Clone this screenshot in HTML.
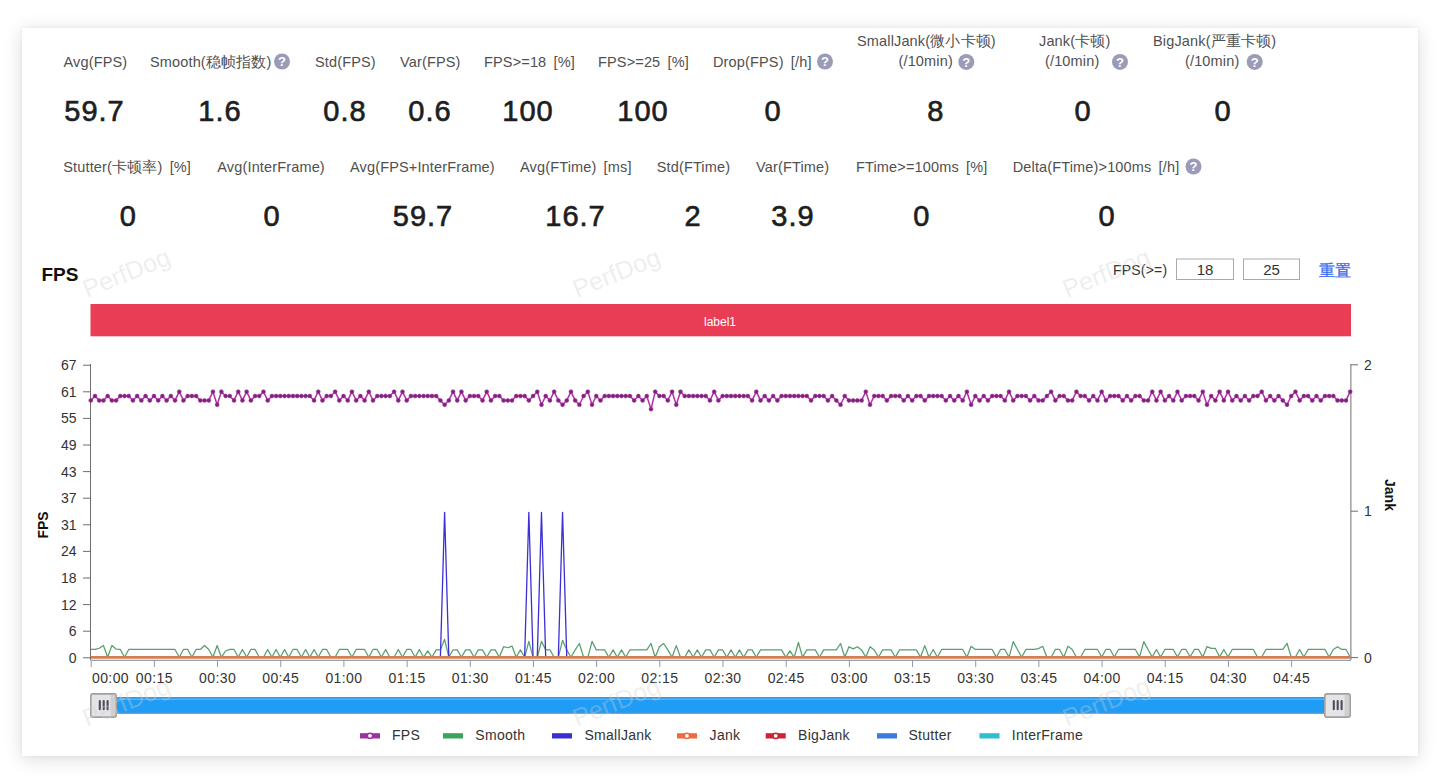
<!DOCTYPE html>
<html><head><meta charset="utf-8"><style>
html,body{margin:0;padding:0;width:1440px;height:779px;overflow:hidden;background:#fff;}
.card{position:absolute;left:22px;top:28px;width:1396px;height:728px;background:#fff;box-shadow:0 0 4px rgba(0,0,0,0.05),0 3px 18px rgba(0,0,0,0.14);}
svg{position:absolute;left:0;top:0;}
</style></head><body>
<div class="card"></div>
<svg width="1440" height="779" viewBox="0 0 1440 779">
<text x="63.5" y="66.6" font-family="Liberation Sans" font-size="14.5" fill="#505050" letter-spacing="0.15" word-spacing="3">Avg(FPS)</text>
<text x="150" y="66.6" font-family="Liberation Sans" font-size="14.5" fill="#505050" letter-spacing="0.15" word-spacing="3">Smooth(稳帧指数)</text>
<text x="315" y="66.6" font-family="Liberation Sans" font-size="14.5" fill="#505050" letter-spacing="0.15" word-spacing="3">Std(FPS)</text>
<text x="400" y="66.6" font-family="Liberation Sans" font-size="14.5" fill="#505050" letter-spacing="0.15" word-spacing="3">Var(FPS)</text>
<text x="484" y="66.6" font-family="Liberation Sans" font-size="14.5" fill="#505050" letter-spacing="0.15" word-spacing="3">FPS&gt;=18 [%]</text>
<text x="598" y="66.6" font-family="Liberation Sans" font-size="14.5" fill="#505050" letter-spacing="0.15" word-spacing="3">FPS&gt;=25 [%]</text>
<text x="713" y="66.6" font-family="Liberation Sans" font-size="14.5" fill="#505050" letter-spacing="0.15" word-spacing="3">Drop(FPS) [/h]</text>
<circle cx="282" cy="61.5" r="8" fill="#9c9bb7"/><text x="282" y="66.1" font-family="Liberation Sans" font-size="13" font-weight="bold" fill="#fff" text-anchor="middle">?</text>
<circle cx="825" cy="61.5" r="8" fill="#9c9bb7"/><text x="825" y="66.1" font-family="Liberation Sans" font-size="13" font-weight="bold" fill="#fff" text-anchor="middle">?</text>
<text x="857" y="46.4" font-family="Liberation Sans" font-size="14.5" fill="#505050" letter-spacing="0.15" word-spacing="3">SmallJank(微小卡顿)</text>
<text x="898.5" y="66.4" font-family="Liberation Sans" font-size="14.5" fill="#505050" letter-spacing="0.15" word-spacing="3">(/10min)</text>
<circle cx="966.3" cy="61.9" r="8" fill="#9c9bb7"/><text x="966.3" y="66.5" font-family="Liberation Sans" font-size="13" font-weight="bold" fill="#fff" text-anchor="middle">?</text>
<text x="1039" y="46.4" font-family="Liberation Sans" font-size="14.5" fill="#505050" letter-spacing="0.15" word-spacing="3">Jank(卡顿)</text>
<text x="1045" y="66.4" font-family="Liberation Sans" font-size="14.5" fill="#505050" letter-spacing="0.15" word-spacing="3">(/10min)</text>
<circle cx="1120" cy="61.9" r="8" fill="#9c9bb7"/><text x="1120" y="66.5" font-family="Liberation Sans" font-size="13" font-weight="bold" fill="#fff" text-anchor="middle">?</text>
<text x="1153" y="46.4" font-family="Liberation Sans" font-size="14.5" fill="#505050" letter-spacing="0.15" word-spacing="3">BigJank(严重卡顿)</text>
<text x="1185" y="66.4" font-family="Liberation Sans" font-size="14.5" fill="#505050" letter-spacing="0.15" word-spacing="3">(/10min)</text>
<circle cx="1254.7" cy="61.9" r="8" fill="#9c9bb7"/><text x="1254.7" y="66.5" font-family="Liberation Sans" font-size="13" font-weight="bold" fill="#fff" text-anchor="middle">?</text>
<text x="94.5" y="120.6" font-family="Liberation Sans" font-size="29" fill="#1e1e1e" stroke="#1e1e1e" stroke-width="0.65" text-anchor="middle" letter-spacing="1">59.7</text>
<text x="220" y="120.6" font-family="Liberation Sans" font-size="29" fill="#1e1e1e" stroke="#1e1e1e" stroke-width="0.65" text-anchor="middle" letter-spacing="1">1.6</text>
<text x="345" y="120.6" font-family="Liberation Sans" font-size="29" fill="#1e1e1e" stroke="#1e1e1e" stroke-width="0.65" text-anchor="middle" letter-spacing="1">0.8</text>
<text x="430" y="120.6" font-family="Liberation Sans" font-size="29" fill="#1e1e1e" stroke="#1e1e1e" stroke-width="0.65" text-anchor="middle" letter-spacing="1">0.6</text>
<text x="528" y="120.6" font-family="Liberation Sans" font-size="29" fill="#1e1e1e" stroke="#1e1e1e" stroke-width="0.65" text-anchor="middle" letter-spacing="1">100</text>
<text x="643" y="120.6" font-family="Liberation Sans" font-size="29" fill="#1e1e1e" stroke="#1e1e1e" stroke-width="0.65" text-anchor="middle" letter-spacing="1">100</text>
<text x="773" y="120.6" font-family="Liberation Sans" font-size="29" fill="#1e1e1e" stroke="#1e1e1e" stroke-width="0.65" text-anchor="middle" letter-spacing="1">0</text>
<text x="935.7" y="120.6" font-family="Liberation Sans" font-size="29" fill="#1e1e1e" stroke="#1e1e1e" stroke-width="0.65" text-anchor="middle" letter-spacing="1">8</text>
<text x="1083" y="120.6" font-family="Liberation Sans" font-size="29" fill="#1e1e1e" stroke="#1e1e1e" stroke-width="0.65" text-anchor="middle" letter-spacing="1">0</text>
<text x="1223" y="120.6" font-family="Liberation Sans" font-size="29" fill="#1e1e1e" stroke="#1e1e1e" stroke-width="0.65" text-anchor="middle" letter-spacing="1">0</text>
<text x="63.3" y="172.4" font-family="Liberation Sans" font-size="14.5" fill="#505050" letter-spacing="0.15" word-spacing="3">Stutter(卡顿率) [%]</text>
<text x="217.3" y="172.4" font-family="Liberation Sans" font-size="14.5" fill="#505050" letter-spacing="0.15" word-spacing="3">Avg(InterFrame)</text>
<text x="350" y="172.4" font-family="Liberation Sans" font-size="14.5" fill="#505050" letter-spacing="0.15" word-spacing="3">Avg(FPS+InterFrame)</text>
<text x="520" y="172.4" font-family="Liberation Sans" font-size="14.5" fill="#505050" letter-spacing="0.15" word-spacing="3">Avg(FTime) [ms]</text>
<text x="656.7" y="172.4" font-family="Liberation Sans" font-size="14.5" fill="#505050" letter-spacing="0.15" word-spacing="3">Std(FTime)</text>
<text x="756" y="172.4" font-family="Liberation Sans" font-size="14.5" fill="#505050" letter-spacing="0.15" word-spacing="3">Var(FTime)</text>
<text x="856" y="172.4" font-family="Liberation Sans" font-size="14.5" fill="#505050" letter-spacing="0.15" word-spacing="3">FTime&gt;=100ms [%]</text>
<text x="1012.7" y="172.4" font-family="Liberation Sans" font-size="14.5" fill="#505050" letter-spacing="0.15" word-spacing="3">Delta(FTime)&gt;100ms [/h]</text>
<circle cx="1193.5" cy="166.5" r="8" fill="#9c9bb7"/><text x="1193.5" y="171.1" font-family="Liberation Sans" font-size="13" font-weight="bold" fill="#fff" text-anchor="middle">?</text>
<text x="128.3" y="225.9" font-family="Liberation Sans" font-size="29" fill="#1e1e1e" stroke="#1e1e1e" stroke-width="0.65" text-anchor="middle" letter-spacing="1">0</text>
<text x="272" y="225.9" font-family="Liberation Sans" font-size="29" fill="#1e1e1e" stroke="#1e1e1e" stroke-width="0.65" text-anchor="middle" letter-spacing="1">0</text>
<text x="423" y="225.9" font-family="Liberation Sans" font-size="29" fill="#1e1e1e" stroke="#1e1e1e" stroke-width="0.65" text-anchor="middle" letter-spacing="1">59.7</text>
<text x="575.5" y="225.9" font-family="Liberation Sans" font-size="29" fill="#1e1e1e" stroke="#1e1e1e" stroke-width="0.65" text-anchor="middle" letter-spacing="1">16.7</text>
<text x="693" y="225.9" font-family="Liberation Sans" font-size="29" fill="#1e1e1e" stroke="#1e1e1e" stroke-width="0.65" text-anchor="middle" letter-spacing="1">2</text>
<text x="793" y="225.9" font-family="Liberation Sans" font-size="29" fill="#1e1e1e" stroke="#1e1e1e" stroke-width="0.65" text-anchor="middle" letter-spacing="1">3.9</text>
<text x="921.7" y="225.9" font-family="Liberation Sans" font-size="29" fill="#1e1e1e" stroke="#1e1e1e" stroke-width="0.65" text-anchor="middle" letter-spacing="1">0</text>
<text x="1107" y="225.9" font-family="Liberation Sans" font-size="29" fill="#1e1e1e" stroke="#1e1e1e" stroke-width="0.65" text-anchor="middle" letter-spacing="1">0</text>
<text x="41.5" y="280.5" font-family="Liberation Sans" font-size="19" font-weight="bold" fill="#111">FPS</text>
<text x="1113" y="275.3" font-family="Liberation Sans" font-size="14" fill="#333" letter-spacing="0.2">FPS(&gt;=)</text>
<rect x="1176.5" y="259" width="57" height="20.5" fill="#fff" stroke="#a9a9a9" stroke-width="1"/>
<rect x="1243.5" y="259" width="56" height="20.5" fill="#fff" stroke="#a9a9a9" stroke-width="1"/>
<text x="1205" y="275.3" font-family="Liberation Sans" font-size="15" fill="#333" text-anchor="middle">18</text>
<text x="1271.5" y="275.3" font-family="Liberation Sans" font-size="15" fill="#333" text-anchor="middle">25</text>
<text x="1318.5" y="276" font-family="Liberation Sans" font-size="16" font-weight="500" fill="#3b6ef2" stroke="#3b6ef2" stroke-width="0.3">重置</text>
<rect x="90.5" y="304" width="1260.5" height="32.3" fill="#e93c55"/>
<text x="720" y="325.5" font-family="Liberation Sans" font-size="12" fill="#fff" text-anchor="middle">label1</text>
<line x1="83" y1="657.80" x2="90.5" y2="657.80" stroke="#6e6e6e" stroke-width="1"/>
<text x="76.5" y="662.80" font-family="Liberation Sans" font-size="14" fill="#333" text-anchor="end">0</text>
<line x1="83" y1="631.20" x2="90.5" y2="631.20" stroke="#6e6e6e" stroke-width="1"/>
<text x="76.5" y="636.20" font-family="Liberation Sans" font-size="14" fill="#333" text-anchor="end">6</text>
<line x1="83" y1="604.60" x2="90.5" y2="604.60" stroke="#6e6e6e" stroke-width="1"/>
<text x="76.5" y="609.60" font-family="Liberation Sans" font-size="14" fill="#333" text-anchor="end">12</text>
<line x1="83" y1="578.00" x2="90.5" y2="578.00" stroke="#6e6e6e" stroke-width="1"/>
<text x="76.5" y="583.00" font-family="Liberation Sans" font-size="14" fill="#333" text-anchor="end">18</text>
<line x1="83" y1="551.40" x2="90.5" y2="551.40" stroke="#6e6e6e" stroke-width="1"/>
<text x="76.5" y="556.40" font-family="Liberation Sans" font-size="14" fill="#333" text-anchor="end">24</text>
<line x1="83" y1="524.80" x2="90.5" y2="524.80" stroke="#6e6e6e" stroke-width="1"/>
<text x="76.5" y="529.80" font-family="Liberation Sans" font-size="14" fill="#333" text-anchor="end">31</text>
<line x1="83" y1="498.20" x2="90.5" y2="498.20" stroke="#6e6e6e" stroke-width="1"/>
<text x="76.5" y="503.20" font-family="Liberation Sans" font-size="14" fill="#333" text-anchor="end">37</text>
<line x1="83" y1="471.60" x2="90.5" y2="471.60" stroke="#6e6e6e" stroke-width="1"/>
<text x="76.5" y="476.60" font-family="Liberation Sans" font-size="14" fill="#333" text-anchor="end">43</text>
<line x1="83" y1="445.00" x2="90.5" y2="445.00" stroke="#6e6e6e" stroke-width="1"/>
<text x="76.5" y="450.00" font-family="Liberation Sans" font-size="14" fill="#333" text-anchor="end">49</text>
<line x1="83" y1="418.40" x2="90.5" y2="418.40" stroke="#6e6e6e" stroke-width="1"/>
<text x="76.5" y="423.40" font-family="Liberation Sans" font-size="14" fill="#333" text-anchor="end">55</text>
<line x1="83" y1="391.80" x2="90.5" y2="391.80" stroke="#6e6e6e" stroke-width="1"/>
<text x="76.5" y="396.80" font-family="Liberation Sans" font-size="14" fill="#333" text-anchor="end">61</text>
<line x1="83" y1="365.20" x2="90.5" y2="365.20" stroke="#6e6e6e" stroke-width="1"/>
<text x="76.5" y="370.20" font-family="Liberation Sans" font-size="14" fill="#333" text-anchor="end">67</text>
<line x1="90.5" y1="364" x2="90.5" y2="660" stroke="#6e6e6e" stroke-width="1"/>
<line x1="1350.9" y1="364" x2="1350.9" y2="660" stroke="#6e6e6e" stroke-width="1"/>
<line x1="1351" y1="657.60" x2="1358" y2="657.60" stroke="#6e6e6e" stroke-width="1"/>
<text x="1364" y="662.60" font-family="Liberation Sans" font-size="14" fill="#333">0</text>
<line x1="1351" y1="511.20" x2="1358" y2="511.20" stroke="#6e6e6e" stroke-width="1"/>
<text x="1364" y="516.20" font-family="Liberation Sans" font-size="14" fill="#333">1</text>
<line x1="1351" y1="364.80" x2="1358" y2="364.80" stroke="#6e6e6e" stroke-width="1"/>
<text x="1364" y="369.80" font-family="Liberation Sans" font-size="14" fill="#333">2</text>
<text transform="translate(47.5 525) rotate(-90)" font-family="Liberation Sans" font-size="14" font-weight="bold" fill="#111" text-anchor="middle">FPS</text>
<text transform="translate(1385 495) rotate(90)" font-family="Liberation Sans" font-size="14" font-weight="bold" fill="#111" text-anchor="middle">Jank</text>
<line x1="90.5" y1="660.3" x2="1351" y2="660.3" stroke="#97a0b4" stroke-width="1.2"/>
<line x1="91.20" y1="660" x2="91.20" y2="667" stroke="#8d96aa" stroke-width="1"/>
<text x="92" y="683" font-family="Liberation Sans" font-size="14" fill="#333" letter-spacing="0.4">00:00</text>
<line x1="154.38" y1="660" x2="154.38" y2="667" stroke="#8d96aa" stroke-width="1"/>
<text x="154.38" y="683" font-family="Liberation Sans" font-size="14" fill="#333" text-anchor="middle" letter-spacing="0.4">00:15</text>
<line x1="217.56" y1="660" x2="217.56" y2="667" stroke="#8d96aa" stroke-width="1"/>
<text x="217.56" y="683" font-family="Liberation Sans" font-size="14" fill="#333" text-anchor="middle" letter-spacing="0.4">00:30</text>
<line x1="280.74" y1="660" x2="280.74" y2="667" stroke="#8d96aa" stroke-width="1"/>
<text x="280.74" y="683" font-family="Liberation Sans" font-size="14" fill="#333" text-anchor="middle" letter-spacing="0.4">00:45</text>
<line x1="343.92" y1="660" x2="343.92" y2="667" stroke="#8d96aa" stroke-width="1"/>
<text x="343.92" y="683" font-family="Liberation Sans" font-size="14" fill="#333" text-anchor="middle" letter-spacing="0.4">01:00</text>
<line x1="407.10" y1="660" x2="407.10" y2="667" stroke="#8d96aa" stroke-width="1"/>
<text x="407.10" y="683" font-family="Liberation Sans" font-size="14" fill="#333" text-anchor="middle" letter-spacing="0.4">01:15</text>
<line x1="470.28" y1="660" x2="470.28" y2="667" stroke="#8d96aa" stroke-width="1"/>
<text x="470.28" y="683" font-family="Liberation Sans" font-size="14" fill="#333" text-anchor="middle" letter-spacing="0.4">01:30</text>
<line x1="533.46" y1="660" x2="533.46" y2="667" stroke="#8d96aa" stroke-width="1"/>
<text x="533.46" y="683" font-family="Liberation Sans" font-size="14" fill="#333" text-anchor="middle" letter-spacing="0.4">01:45</text>
<line x1="596.64" y1="660" x2="596.64" y2="667" stroke="#8d96aa" stroke-width="1"/>
<text x="596.64" y="683" font-family="Liberation Sans" font-size="14" fill="#333" text-anchor="middle" letter-spacing="0.4">02:00</text>
<line x1="659.82" y1="660" x2="659.82" y2="667" stroke="#8d96aa" stroke-width="1"/>
<text x="659.82" y="683" font-family="Liberation Sans" font-size="14" fill="#333" text-anchor="middle" letter-spacing="0.4">02:15</text>
<line x1="723.00" y1="660" x2="723.00" y2="667" stroke="#8d96aa" stroke-width="1"/>
<text x="723.00" y="683" font-family="Liberation Sans" font-size="14" fill="#333" text-anchor="middle" letter-spacing="0.4">02:30</text>
<line x1="786.18" y1="660" x2="786.18" y2="667" stroke="#8d96aa" stroke-width="1"/>
<text x="786.18" y="683" font-family="Liberation Sans" font-size="14" fill="#333" text-anchor="middle" letter-spacing="0.4">02:45</text>
<line x1="849.36" y1="660" x2="849.36" y2="667" stroke="#8d96aa" stroke-width="1"/>
<text x="849.36" y="683" font-family="Liberation Sans" font-size="14" fill="#333" text-anchor="middle" letter-spacing="0.4">03:00</text>
<line x1="912.54" y1="660" x2="912.54" y2="667" stroke="#8d96aa" stroke-width="1"/>
<text x="912.54" y="683" font-family="Liberation Sans" font-size="14" fill="#333" text-anchor="middle" letter-spacing="0.4">03:15</text>
<line x1="975.72" y1="660" x2="975.72" y2="667" stroke="#8d96aa" stroke-width="1"/>
<text x="975.72" y="683" font-family="Liberation Sans" font-size="14" fill="#333" text-anchor="middle" letter-spacing="0.4">03:30</text>
<line x1="1038.90" y1="660" x2="1038.90" y2="667" stroke="#8d96aa" stroke-width="1"/>
<text x="1038.90" y="683" font-family="Liberation Sans" font-size="14" fill="#333" text-anchor="middle" letter-spacing="0.4">03:45</text>
<line x1="1102.08" y1="660" x2="1102.08" y2="667" stroke="#8d96aa" stroke-width="1"/>
<text x="1102.08" y="683" font-family="Liberation Sans" font-size="14" fill="#333" text-anchor="middle" letter-spacing="0.4">04:00</text>
<line x1="1165.26" y1="660" x2="1165.26" y2="667" stroke="#8d96aa" stroke-width="1"/>
<text x="1165.26" y="683" font-family="Liberation Sans" font-size="14" fill="#333" text-anchor="middle" letter-spacing="0.4">04:15</text>
<line x1="1228.44" y1="660" x2="1228.44" y2="667" stroke="#8d96aa" stroke-width="1"/>
<text x="1228.44" y="683" font-family="Liberation Sans" font-size="14" fill="#333" text-anchor="middle" letter-spacing="0.4">04:30</text>
<line x1="1291.62" y1="660" x2="1291.62" y2="667" stroke="#8d96aa" stroke-width="1"/>
<text x="1291.62" y="683" font-family="Liberation Sans" font-size="14" fill="#333" text-anchor="middle" letter-spacing="0.4">04:45</text>
<polyline points="90.80,649.45 95.01,649.45 99.22,648.27 103.44,645.52 107.65,657.30 111.86,645.52 116.07,649.05 120.28,649.45 124.50,657.30 128.71,649.45 132.92,649.45 137.13,649.45 141.34,649.45 145.56,649.45 149.77,649.45 153.98,649.45 158.19,649.45 162.40,649.45 166.62,649.45 170.83,649.45 175.04,649.45 179.25,657.30 183.46,649.45 187.68,649.45 191.89,657.30 196.10,649.45 200.31,649.45 204.52,645.52 208.74,649.45 212.95,657.30 217.16,645.52 221.37,657.30 225.58,651.02 229.80,649.45 234.01,649.45 238.22,657.30 242.43,649.45 246.64,657.30 250.86,649.45 255.07,649.45 259.28,657.30 263.49,657.30 267.70,649.45 271.92,657.30 276.13,649.45 280.34,657.30 284.55,649.45 288.76,657.30 292.98,649.45 297.19,649.45 301.40,657.30 305.61,649.45 309.82,657.30 314.04,649.45 318.25,657.30 322.46,649.45 326.67,649.45 330.88,657.30 335.10,657.30 339.31,649.45 343.52,649.45 347.73,649.45 351.94,657.30 356.16,649.45 360.37,649.45 364.58,649.45 368.79,657.30 373.00,649.45 377.22,649.45 381.43,657.30 385.64,649.45 389.85,657.30 394.06,657.30 398.28,649.45 402.49,657.30 406.70,649.45 410.91,649.45 415.12,657.30 419.34,649.45 423.55,657.30 427.76,650.94 431.97,657.30 436.18,649.88 440.40,649.88 444.61,639.28 448.82,657.30 453.03,649.88 457.24,649.88 461.46,657.30 465.67,649.88 469.88,649.88 474.09,657.30 478.30,649.88 482.52,649.88 486.73,657.30 490.94,649.88 495.15,649.88 499.36,657.30 503.58,646.70 507.79,647.76 512.00,646.07 516.21,657.30 520.42,649.88 524.64,657.30 528.85,641.40 533.06,657.30 537.27,657.30 541.48,641.40 545.70,649.88 549.91,649.88 554.12,657.30 558.33,657.30 562.54,640.34 566.76,649.88 570.97,657.30 575.18,649.88 579.39,643.52 583.60,657.30 587.82,657.30 592.03,641.40 596.24,649.88 600.45,649.88 604.66,649.88 608.88,657.30 613.09,649.88 617.30,657.30 621.51,649.88 625.72,657.30 629.94,649.88 634.15,649.88 638.36,649.88 642.57,649.88 646.78,649.88 651.00,643.52 655.21,657.30 659.42,646.70 663.63,643.52 667.84,649.88 672.06,657.30 676.27,645.64 680.48,657.30 684.69,657.30 688.90,649.88 693.12,657.30 697.33,649.88 701.54,657.30 705.75,649.88 709.96,649.88 714.18,657.30 718.39,649.88 722.60,649.88 726.81,657.30 731.02,649.88 735.24,657.30 739.45,649.88 743.66,657.30 747.87,649.88 752.08,649.88 756.30,657.30 760.51,649.88 764.72,649.88 768.93,649.88 773.14,649.88 777.36,649.88 781.57,649.88 785.78,657.30 789.99,650.94 794.20,657.30 798.42,642.46 802.63,657.30 806.84,649.88 811.05,649.88 815.26,649.88 819.48,657.30 823.69,649.88 827.90,649.88 832.11,649.88 836.32,649.88 840.54,643.52 844.75,657.30 848.96,646.70 853.17,648.82 857.38,646.70 861.60,649.88 865.81,657.30 870.02,646.70 874.23,649.88 878.44,657.30 882.66,649.88 886.87,649.88 891.08,649.88 895.29,657.30 899.50,649.88 903.72,649.88 907.93,649.88 912.14,649.88 916.35,649.88 920.56,657.30 924.78,645.64 928.99,657.30 933.20,649.45 937.41,657.30 941.62,649.45 945.84,649.45 950.05,649.45 954.26,649.45 958.47,649.45 962.68,649.45 966.90,657.30 971.11,646.31 975.32,649.45 979.53,649.45 983.74,649.45 987.96,649.45 992.17,649.45 996.38,657.30 1000.59,649.45 1004.80,649.45 1009.02,657.30 1013.23,641.59 1017.44,649.45 1021.65,657.30 1025.86,649.45 1030.08,649.45 1034.29,649.45 1038.50,648.66 1042.71,646.31 1046.92,657.30 1051.14,657.30 1055.35,649.45 1059.56,649.45 1063.77,657.30 1067.98,646.31 1072.20,649.45 1076.41,657.30 1080.62,657.30 1084.83,649.45 1089.04,649.45 1093.26,649.45 1097.47,649.45 1101.68,656.95 1105.89,649.45 1110.10,649.45 1114.32,656.95 1118.53,649.45 1122.74,649.45 1126.95,649.45 1131.16,649.45 1135.38,649.45 1139.59,656.95 1143.80,641.59 1148.01,649.45 1152.22,656.95 1156.44,649.45 1160.65,656.95 1164.86,649.45 1169.07,649.45 1173.28,649.45 1177.50,656.95 1181.71,649.45 1185.92,649.45 1190.13,656.95 1194.34,649.45 1198.56,649.45 1202.77,656.95 1206.98,646.70 1211.19,648.43 1215.40,648.43 1219.62,656.95 1223.83,649.45 1228.04,656.95 1232.25,649.45 1236.46,649.45 1240.68,649.45 1244.89,649.45 1249.10,649.45 1253.31,649.45 1257.52,656.95 1261.74,656.95 1265.95,649.45 1270.16,649.45 1274.37,649.45 1278.58,649.45 1282.80,649.45 1287.01,643.28 1291.22,656.95 1295.43,656.95 1299.64,649.45 1303.86,656.95 1308.07,649.45 1312.28,649.45 1316.49,649.45 1320.70,649.45 1324.92,649.45 1329.13,656.95 1333.34,649.45 1337.55,646.70 1341.76,649.45 1345.98,649.45 1350.19,656.95" fill="none" stroke="#55a06e" stroke-width="1.25" stroke-linejoin="round"/>
<polyline points="90.80,657.30 95.01,657.30 99.22,657.30 103.44,657.30 107.65,657.30 111.86,657.30 116.07,657.30 120.28,657.30 124.50,657.30 128.71,657.30 132.92,657.30 137.13,657.30 141.34,657.30 145.56,657.30 149.77,657.30 153.98,657.30 158.19,657.30 162.40,657.30 166.62,657.30 170.83,657.30 175.04,657.30 179.25,657.30 183.46,657.30 187.68,657.30 191.89,657.30 196.10,657.30 200.31,657.30 204.52,657.30 208.74,657.30 212.95,657.30 217.16,657.30 221.37,657.30 225.58,657.30 229.80,657.30 234.01,657.30 238.22,657.30 242.43,657.30 246.64,657.30 250.86,657.30 255.07,657.30 259.28,657.30 263.49,657.30 267.70,657.30 271.92,657.30 276.13,657.30 280.34,657.30 284.55,657.30 288.76,657.30 292.98,657.30 297.19,657.30 301.40,657.30 305.61,657.30 309.82,657.30 314.04,657.30 318.25,657.30 322.46,657.30 326.67,657.30 330.88,657.30 335.10,657.30 339.31,657.30 343.52,657.30 347.73,657.30 351.94,657.30 356.16,657.30 360.37,657.30 364.58,657.30 368.79,657.30 373.00,657.30 377.22,657.30 381.43,657.30 385.64,657.30 389.85,657.30 394.06,657.30 398.28,657.30 402.49,657.30 406.70,657.30 410.91,657.30 415.12,657.30 419.34,657.30 423.55,657.30 427.76,657.30 431.97,657.30 436.18,657.30 440.40,657.30 444.61,512.30 448.82,657.30 453.03,657.30 457.24,657.30 461.46,657.30 465.67,657.30 469.88,657.30 474.09,657.30 478.30,657.30 482.52,657.30 486.73,657.30 490.94,657.30 495.15,657.30 499.36,657.30 503.58,657.30 507.79,657.30 512.00,657.30 516.21,657.30 520.42,657.30 524.64,657.30 528.85,512.30 533.06,657.30 537.27,657.30 541.48,512.30 545.70,657.30 549.91,657.30 554.12,657.30 558.33,657.30 562.54,512.30 566.76,657.30 570.97,657.30 575.18,657.30 579.39,657.30 583.60,657.30 587.82,657.30 592.03,657.30 596.24,657.30 600.45,657.30 604.66,657.30 608.88,657.30 613.09,657.30 617.30,657.30 621.51,657.30 625.72,657.30 629.94,657.30 634.15,657.30 638.36,657.30 642.57,657.30 646.78,657.30 651.00,657.30 655.21,657.30 659.42,657.30 663.63,657.30 667.84,657.30 672.06,657.30 676.27,657.30 680.48,657.30 684.69,657.30 688.90,657.30 693.12,657.30 697.33,657.30 701.54,657.30 705.75,657.30 709.96,657.30 714.18,657.30 718.39,657.30 722.60,657.30 726.81,657.30 731.02,657.30 735.24,657.30 739.45,657.30 743.66,657.30 747.87,657.30 752.08,657.30 756.30,657.30 760.51,657.30 764.72,657.30 768.93,657.30 773.14,657.30 777.36,657.30 781.57,657.30 785.78,657.30 789.99,657.30 794.20,657.30 798.42,657.30 802.63,657.30 806.84,657.30 811.05,657.30 815.26,657.30 819.48,657.30 823.69,657.30 827.90,657.30 832.11,657.30 836.32,657.30 840.54,657.30 844.75,657.30 848.96,657.30 853.17,657.30 857.38,657.30 861.60,657.30 865.81,657.30 870.02,657.30 874.23,657.30 878.44,657.30 882.66,657.30 886.87,657.30 891.08,657.30 895.29,657.30 899.50,657.30 903.72,657.30 907.93,657.30 912.14,657.30 916.35,657.30 920.56,657.30 924.78,657.30 928.99,657.30 933.20,657.30 937.41,657.30 941.62,657.30 945.84,657.30 950.05,657.30 954.26,657.30 958.47,657.30 962.68,657.30 966.90,657.30 971.11,657.30 975.32,657.30 979.53,657.30 983.74,657.30 987.96,657.30 992.17,657.30 996.38,657.30 1000.59,657.30 1004.80,657.30 1009.02,657.30 1013.23,657.30 1017.44,657.30 1021.65,657.30 1025.86,657.30 1030.08,657.30 1034.29,657.30 1038.50,657.30 1042.71,657.30 1046.92,657.30 1051.14,657.30 1055.35,657.30 1059.56,657.30 1063.77,657.30 1067.98,657.30 1072.20,657.30 1076.41,657.30 1080.62,657.30 1084.83,657.30 1089.04,657.30 1093.26,657.30 1097.47,657.30 1101.68,657.30 1105.89,657.30 1110.10,657.30 1114.32,657.30 1118.53,657.30 1122.74,657.30 1126.95,657.30 1131.16,657.30 1135.38,657.30 1139.59,657.30 1143.80,657.30 1148.01,657.30 1152.22,657.30 1156.44,657.30 1160.65,657.30 1164.86,657.30 1169.07,657.30 1173.28,657.30 1177.50,657.30 1181.71,657.30 1185.92,657.30 1190.13,657.30 1194.34,657.30 1198.56,657.30 1202.77,657.30 1206.98,657.30 1211.19,657.30 1215.40,657.30 1219.62,657.30 1223.83,657.30 1228.04,657.30 1232.25,657.30 1236.46,657.30 1240.68,657.30 1244.89,657.30 1249.10,657.30 1253.31,657.30 1257.52,657.30 1261.74,657.30 1265.95,657.30 1270.16,657.30 1274.37,657.30 1278.58,657.30 1282.80,657.30 1287.01,657.30 1291.22,657.30 1295.43,657.30 1299.64,657.30 1303.86,657.30 1308.07,657.30 1312.28,657.30 1316.49,657.30 1320.70,657.30 1324.92,657.30 1329.13,657.30 1333.34,657.30 1337.55,657.30 1341.76,657.30 1345.98,657.30 1350.19,657.30" fill="none" stroke="#3c2fd6" stroke-width="1.3" stroke-linejoin="round"/>
<line x1="90.80" y1="657.30" x2="1350.19" y2="657.30" stroke="#d28052" stroke-width="2.8"/>
<polyline points="90.80,400.40 95.01,396.04 99.22,400.40 103.44,400.40 107.65,396.04 111.86,400.40 116.07,400.40 120.28,396.04 124.50,396.04 128.71,396.04 132.92,400.40 137.13,396.04 141.34,400.40 145.56,396.04 149.77,400.40 153.98,396.04 158.19,400.40 162.40,396.04 166.62,400.40 170.83,396.04 175.04,400.40 179.25,391.68 183.46,400.40 187.68,396.04 191.89,396.04 196.10,396.04 200.31,400.40 204.52,400.40 208.74,400.40 212.95,391.68 217.16,404.76 221.37,391.68 225.58,396.04 229.80,396.04 234.01,400.40 238.22,391.68 242.43,400.40 246.64,391.68 250.86,400.40 255.07,396.04 259.28,396.04 263.49,391.68 267.70,400.40 271.92,396.04 276.13,396.04 280.34,396.04 284.55,396.04 288.76,396.04 292.98,396.04 297.19,396.04 301.40,396.04 305.61,396.04 309.82,396.04 314.04,400.40 318.25,391.68 322.46,400.40 326.67,396.04 330.88,396.04 335.10,391.68 339.31,400.40 343.52,396.04 347.73,400.40 351.94,391.68 356.16,400.40 360.37,396.04 364.58,400.40 368.79,391.68 373.00,400.40 377.22,396.04 381.43,396.04 385.64,396.04 389.85,396.04 394.06,391.68 398.28,400.40 402.49,391.68 406.70,400.40 410.91,396.04 415.12,396.04 419.34,396.04 423.55,396.04 427.76,396.04 431.97,396.04 436.18,396.04 440.40,400.40 444.61,404.76 448.82,400.40 453.03,391.68 457.24,400.40 461.46,391.68 465.67,400.40 469.88,396.04 474.09,396.04 478.30,396.04 482.52,400.40 486.73,391.68 490.94,400.40 495.15,396.04 499.36,396.04 503.58,400.40 507.79,400.40 512.00,400.40 516.21,396.04 520.42,396.04 524.64,396.04 528.85,400.40 533.06,396.04 537.27,391.68 541.48,404.76 545.70,396.04 549.91,400.40 554.12,391.68 558.33,400.40 562.54,404.76 566.76,400.40 570.97,391.68 575.18,400.40 579.39,404.76 583.60,396.04 587.82,391.68 592.03,404.76 596.24,396.04 600.45,400.40 604.66,396.04 608.88,396.04 613.09,396.04 617.30,396.04 621.51,396.04 625.72,396.04 629.94,396.04 634.15,400.40 638.36,396.04 642.57,400.40 646.78,396.04 651.00,409.13 655.21,391.68 659.42,396.04 663.63,396.04 667.84,400.40 672.06,391.68 676.27,404.76 680.48,391.68 684.69,396.04 688.90,396.04 693.12,396.04 697.33,396.04 701.54,396.04 705.75,396.04 709.96,400.40 714.18,391.68 718.39,400.40 722.60,396.04 726.81,396.04 731.02,396.04 735.24,396.04 739.45,396.04 743.66,396.04 747.87,396.04 752.08,400.40 756.30,391.68 760.51,400.40 764.72,396.04 768.93,400.40 773.14,396.04 777.36,400.40 781.57,396.04 785.78,396.04 789.99,396.04 794.20,396.04 798.42,396.04 802.63,396.04 806.84,396.04 811.05,400.40 815.26,396.04 819.48,396.04 823.69,396.04 827.90,400.40 832.11,396.04 836.32,400.40 840.54,404.76 844.75,396.04 848.96,400.40 853.17,400.40 857.38,400.40 861.60,400.40 865.81,391.68 870.02,404.76 874.23,396.04 878.44,396.04 882.66,396.04 886.87,400.40 891.08,396.04 895.29,396.04 899.50,396.04 903.72,400.40 907.93,396.04 912.14,400.40 916.35,396.04 920.56,396.04 924.78,400.40 928.99,396.04 933.20,396.04 937.41,396.04 941.62,396.04 945.84,400.40 950.05,396.04 954.26,400.40 958.47,396.04 962.68,400.40 966.90,391.68 971.11,404.76 975.32,396.04 979.53,400.40 983.74,396.04 987.96,400.40 992.17,396.04 996.38,396.04 1000.59,396.04 1004.80,400.40 1009.02,391.68 1013.23,400.40 1017.44,396.04 1021.65,396.04 1025.86,396.04 1030.08,400.40 1034.29,396.04 1038.50,400.40 1042.71,400.40 1046.92,396.04 1051.14,391.68 1055.35,400.40 1059.56,396.04 1063.77,396.04 1067.98,400.40 1072.20,400.40 1076.41,391.68 1080.62,396.04 1084.83,396.04 1089.04,400.40 1093.26,396.04 1097.47,400.40 1101.68,391.68 1105.89,400.40 1110.10,396.04 1114.32,396.04 1118.53,396.04 1122.74,400.40 1126.95,396.04 1131.16,400.40 1135.38,396.04 1139.59,396.04 1143.80,400.40 1148.01,400.40 1152.22,391.68 1156.44,400.40 1160.65,391.68 1164.86,400.40 1169.07,396.04 1173.28,400.40 1177.50,391.68 1181.71,400.40 1185.92,396.04 1190.13,396.04 1194.34,396.04 1198.56,400.40 1202.77,391.68 1206.98,404.76 1211.19,396.04 1215.40,400.40 1219.62,391.68 1223.83,400.40 1228.04,391.68 1232.25,400.40 1236.46,396.04 1240.68,400.40 1244.89,396.04 1249.10,400.40 1253.31,396.04 1257.52,396.04 1261.74,391.68 1265.95,400.40 1270.16,396.04 1274.37,400.40 1278.58,396.04 1282.80,400.40 1287.01,404.76 1291.22,396.04 1295.43,391.68 1299.64,400.40 1303.86,396.04 1308.07,396.04 1312.28,400.40 1316.49,396.04 1320.70,400.40 1324.92,396.04 1329.13,396.04 1333.34,396.04 1337.55,400.40 1341.76,400.40 1345.98,400.40 1350.19,391.68" fill="none" stroke="#b42dab" stroke-width="1.5" stroke-linejoin="round"/>
<g fill="#7a2676" stroke="#ab2ca2" stroke-width="0.5"><circle cx="90.80" cy="400.40" r="2.0"/><circle cx="95.01" cy="396.04" r="2.0"/><circle cx="99.22" cy="400.40" r="2.0"/><circle cx="103.44" cy="400.40" r="2.0"/><circle cx="107.65" cy="396.04" r="2.0"/><circle cx="111.86" cy="400.40" r="2.0"/><circle cx="116.07" cy="400.40" r="2.0"/><circle cx="120.28" cy="396.04" r="2.0"/><circle cx="124.50" cy="396.04" r="2.0"/><circle cx="128.71" cy="396.04" r="2.0"/><circle cx="132.92" cy="400.40" r="2.0"/><circle cx="137.13" cy="396.04" r="2.0"/><circle cx="141.34" cy="400.40" r="2.0"/><circle cx="145.56" cy="396.04" r="2.0"/><circle cx="149.77" cy="400.40" r="2.0"/><circle cx="153.98" cy="396.04" r="2.0"/><circle cx="158.19" cy="400.40" r="2.0"/><circle cx="162.40" cy="396.04" r="2.0"/><circle cx="166.62" cy="400.40" r="2.0"/><circle cx="170.83" cy="396.04" r="2.0"/><circle cx="175.04" cy="400.40" r="2.0"/><circle cx="179.25" cy="391.68" r="2.0"/><circle cx="183.46" cy="400.40" r="2.0"/><circle cx="187.68" cy="396.04" r="2.0"/><circle cx="191.89" cy="396.04" r="2.0"/><circle cx="196.10" cy="396.04" r="2.0"/><circle cx="200.31" cy="400.40" r="2.0"/><circle cx="204.52" cy="400.40" r="2.0"/><circle cx="208.74" cy="400.40" r="2.0"/><circle cx="212.95" cy="391.68" r="2.0"/><circle cx="217.16" cy="404.76" r="2.0"/><circle cx="221.37" cy="391.68" r="2.0"/><circle cx="225.58" cy="396.04" r="2.0"/><circle cx="229.80" cy="396.04" r="2.0"/><circle cx="234.01" cy="400.40" r="2.0"/><circle cx="238.22" cy="391.68" r="2.0"/><circle cx="242.43" cy="400.40" r="2.0"/><circle cx="246.64" cy="391.68" r="2.0"/><circle cx="250.86" cy="400.40" r="2.0"/><circle cx="255.07" cy="396.04" r="2.0"/><circle cx="259.28" cy="396.04" r="2.0"/><circle cx="263.49" cy="391.68" r="2.0"/><circle cx="267.70" cy="400.40" r="2.0"/><circle cx="271.92" cy="396.04" r="2.0"/><circle cx="276.13" cy="396.04" r="2.0"/><circle cx="280.34" cy="396.04" r="2.0"/><circle cx="284.55" cy="396.04" r="2.0"/><circle cx="288.76" cy="396.04" r="2.0"/><circle cx="292.98" cy="396.04" r="2.0"/><circle cx="297.19" cy="396.04" r="2.0"/><circle cx="301.40" cy="396.04" r="2.0"/><circle cx="305.61" cy="396.04" r="2.0"/><circle cx="309.82" cy="396.04" r="2.0"/><circle cx="314.04" cy="400.40" r="2.0"/><circle cx="318.25" cy="391.68" r="2.0"/><circle cx="322.46" cy="400.40" r="2.0"/><circle cx="326.67" cy="396.04" r="2.0"/><circle cx="330.88" cy="396.04" r="2.0"/><circle cx="335.10" cy="391.68" r="2.0"/><circle cx="339.31" cy="400.40" r="2.0"/><circle cx="343.52" cy="396.04" r="2.0"/><circle cx="347.73" cy="400.40" r="2.0"/><circle cx="351.94" cy="391.68" r="2.0"/><circle cx="356.16" cy="400.40" r="2.0"/><circle cx="360.37" cy="396.04" r="2.0"/><circle cx="364.58" cy="400.40" r="2.0"/><circle cx="368.79" cy="391.68" r="2.0"/><circle cx="373.00" cy="400.40" r="2.0"/><circle cx="377.22" cy="396.04" r="2.0"/><circle cx="381.43" cy="396.04" r="2.0"/><circle cx="385.64" cy="396.04" r="2.0"/><circle cx="389.85" cy="396.04" r="2.0"/><circle cx="394.06" cy="391.68" r="2.0"/><circle cx="398.28" cy="400.40" r="2.0"/><circle cx="402.49" cy="391.68" r="2.0"/><circle cx="406.70" cy="400.40" r="2.0"/><circle cx="410.91" cy="396.04" r="2.0"/><circle cx="415.12" cy="396.04" r="2.0"/><circle cx="419.34" cy="396.04" r="2.0"/><circle cx="423.55" cy="396.04" r="2.0"/><circle cx="427.76" cy="396.04" r="2.0"/><circle cx="431.97" cy="396.04" r="2.0"/><circle cx="436.18" cy="396.04" r="2.0"/><circle cx="440.40" cy="400.40" r="2.0"/><circle cx="444.61" cy="404.76" r="2.0"/><circle cx="448.82" cy="400.40" r="2.0"/><circle cx="453.03" cy="391.68" r="2.0"/><circle cx="457.24" cy="400.40" r="2.0"/><circle cx="461.46" cy="391.68" r="2.0"/><circle cx="465.67" cy="400.40" r="2.0"/><circle cx="469.88" cy="396.04" r="2.0"/><circle cx="474.09" cy="396.04" r="2.0"/><circle cx="478.30" cy="396.04" r="2.0"/><circle cx="482.52" cy="400.40" r="2.0"/><circle cx="486.73" cy="391.68" r="2.0"/><circle cx="490.94" cy="400.40" r="2.0"/><circle cx="495.15" cy="396.04" r="2.0"/><circle cx="499.36" cy="396.04" r="2.0"/><circle cx="503.58" cy="400.40" r="2.0"/><circle cx="507.79" cy="400.40" r="2.0"/><circle cx="512.00" cy="400.40" r="2.0"/><circle cx="516.21" cy="396.04" r="2.0"/><circle cx="520.42" cy="396.04" r="2.0"/><circle cx="524.64" cy="396.04" r="2.0"/><circle cx="528.85" cy="400.40" r="2.0"/><circle cx="533.06" cy="396.04" r="2.0"/><circle cx="537.27" cy="391.68" r="2.0"/><circle cx="541.48" cy="404.76" r="2.0"/><circle cx="545.70" cy="396.04" r="2.0"/><circle cx="549.91" cy="400.40" r="2.0"/><circle cx="554.12" cy="391.68" r="2.0"/><circle cx="558.33" cy="400.40" r="2.0"/><circle cx="562.54" cy="404.76" r="2.0"/><circle cx="566.76" cy="400.40" r="2.0"/><circle cx="570.97" cy="391.68" r="2.0"/><circle cx="575.18" cy="400.40" r="2.0"/><circle cx="579.39" cy="404.76" r="2.0"/><circle cx="583.60" cy="396.04" r="2.0"/><circle cx="587.82" cy="391.68" r="2.0"/><circle cx="592.03" cy="404.76" r="2.0"/><circle cx="596.24" cy="396.04" r="2.0"/><circle cx="600.45" cy="400.40" r="2.0"/><circle cx="604.66" cy="396.04" r="2.0"/><circle cx="608.88" cy="396.04" r="2.0"/><circle cx="613.09" cy="396.04" r="2.0"/><circle cx="617.30" cy="396.04" r="2.0"/><circle cx="621.51" cy="396.04" r="2.0"/><circle cx="625.72" cy="396.04" r="2.0"/><circle cx="629.94" cy="396.04" r="2.0"/><circle cx="634.15" cy="400.40" r="2.0"/><circle cx="638.36" cy="396.04" r="2.0"/><circle cx="642.57" cy="400.40" r="2.0"/><circle cx="646.78" cy="396.04" r="2.0"/><circle cx="651.00" cy="409.13" r="2.0"/><circle cx="655.21" cy="391.68" r="2.0"/><circle cx="659.42" cy="396.04" r="2.0"/><circle cx="663.63" cy="396.04" r="2.0"/><circle cx="667.84" cy="400.40" r="2.0"/><circle cx="672.06" cy="391.68" r="2.0"/><circle cx="676.27" cy="404.76" r="2.0"/><circle cx="680.48" cy="391.68" r="2.0"/><circle cx="684.69" cy="396.04" r="2.0"/><circle cx="688.90" cy="396.04" r="2.0"/><circle cx="693.12" cy="396.04" r="2.0"/><circle cx="697.33" cy="396.04" r="2.0"/><circle cx="701.54" cy="396.04" r="2.0"/><circle cx="705.75" cy="396.04" r="2.0"/><circle cx="709.96" cy="400.40" r="2.0"/><circle cx="714.18" cy="391.68" r="2.0"/><circle cx="718.39" cy="400.40" r="2.0"/><circle cx="722.60" cy="396.04" r="2.0"/><circle cx="726.81" cy="396.04" r="2.0"/><circle cx="731.02" cy="396.04" r="2.0"/><circle cx="735.24" cy="396.04" r="2.0"/><circle cx="739.45" cy="396.04" r="2.0"/><circle cx="743.66" cy="396.04" r="2.0"/><circle cx="747.87" cy="396.04" r="2.0"/><circle cx="752.08" cy="400.40" r="2.0"/><circle cx="756.30" cy="391.68" r="2.0"/><circle cx="760.51" cy="400.40" r="2.0"/><circle cx="764.72" cy="396.04" r="2.0"/><circle cx="768.93" cy="400.40" r="2.0"/><circle cx="773.14" cy="396.04" r="2.0"/><circle cx="777.36" cy="400.40" r="2.0"/><circle cx="781.57" cy="396.04" r="2.0"/><circle cx="785.78" cy="396.04" r="2.0"/><circle cx="789.99" cy="396.04" r="2.0"/><circle cx="794.20" cy="396.04" r="2.0"/><circle cx="798.42" cy="396.04" r="2.0"/><circle cx="802.63" cy="396.04" r="2.0"/><circle cx="806.84" cy="396.04" r="2.0"/><circle cx="811.05" cy="400.40" r="2.0"/><circle cx="815.26" cy="396.04" r="2.0"/><circle cx="819.48" cy="396.04" r="2.0"/><circle cx="823.69" cy="396.04" r="2.0"/><circle cx="827.90" cy="400.40" r="2.0"/><circle cx="832.11" cy="396.04" r="2.0"/><circle cx="836.32" cy="400.40" r="2.0"/><circle cx="840.54" cy="404.76" r="2.0"/><circle cx="844.75" cy="396.04" r="2.0"/><circle cx="848.96" cy="400.40" r="2.0"/><circle cx="853.17" cy="400.40" r="2.0"/><circle cx="857.38" cy="400.40" r="2.0"/><circle cx="861.60" cy="400.40" r="2.0"/><circle cx="865.81" cy="391.68" r="2.0"/><circle cx="870.02" cy="404.76" r="2.0"/><circle cx="874.23" cy="396.04" r="2.0"/><circle cx="878.44" cy="396.04" r="2.0"/><circle cx="882.66" cy="396.04" r="2.0"/><circle cx="886.87" cy="400.40" r="2.0"/><circle cx="891.08" cy="396.04" r="2.0"/><circle cx="895.29" cy="396.04" r="2.0"/><circle cx="899.50" cy="396.04" r="2.0"/><circle cx="903.72" cy="400.40" r="2.0"/><circle cx="907.93" cy="396.04" r="2.0"/><circle cx="912.14" cy="400.40" r="2.0"/><circle cx="916.35" cy="396.04" r="2.0"/><circle cx="920.56" cy="396.04" r="2.0"/><circle cx="924.78" cy="400.40" r="2.0"/><circle cx="928.99" cy="396.04" r="2.0"/><circle cx="933.20" cy="396.04" r="2.0"/><circle cx="937.41" cy="396.04" r="2.0"/><circle cx="941.62" cy="396.04" r="2.0"/><circle cx="945.84" cy="400.40" r="2.0"/><circle cx="950.05" cy="396.04" r="2.0"/><circle cx="954.26" cy="400.40" r="2.0"/><circle cx="958.47" cy="396.04" r="2.0"/><circle cx="962.68" cy="400.40" r="2.0"/><circle cx="966.90" cy="391.68" r="2.0"/><circle cx="971.11" cy="404.76" r="2.0"/><circle cx="975.32" cy="396.04" r="2.0"/><circle cx="979.53" cy="400.40" r="2.0"/><circle cx="983.74" cy="396.04" r="2.0"/><circle cx="987.96" cy="400.40" r="2.0"/><circle cx="992.17" cy="396.04" r="2.0"/><circle cx="996.38" cy="396.04" r="2.0"/><circle cx="1000.59" cy="396.04" r="2.0"/><circle cx="1004.80" cy="400.40" r="2.0"/><circle cx="1009.02" cy="391.68" r="2.0"/><circle cx="1013.23" cy="400.40" r="2.0"/><circle cx="1017.44" cy="396.04" r="2.0"/><circle cx="1021.65" cy="396.04" r="2.0"/><circle cx="1025.86" cy="396.04" r="2.0"/><circle cx="1030.08" cy="400.40" r="2.0"/><circle cx="1034.29" cy="396.04" r="2.0"/><circle cx="1038.50" cy="400.40" r="2.0"/><circle cx="1042.71" cy="400.40" r="2.0"/><circle cx="1046.92" cy="396.04" r="2.0"/><circle cx="1051.14" cy="391.68" r="2.0"/><circle cx="1055.35" cy="400.40" r="2.0"/><circle cx="1059.56" cy="396.04" r="2.0"/><circle cx="1063.77" cy="396.04" r="2.0"/><circle cx="1067.98" cy="400.40" r="2.0"/><circle cx="1072.20" cy="400.40" r="2.0"/><circle cx="1076.41" cy="391.68" r="2.0"/><circle cx="1080.62" cy="396.04" r="2.0"/><circle cx="1084.83" cy="396.04" r="2.0"/><circle cx="1089.04" cy="400.40" r="2.0"/><circle cx="1093.26" cy="396.04" r="2.0"/><circle cx="1097.47" cy="400.40" r="2.0"/><circle cx="1101.68" cy="391.68" r="2.0"/><circle cx="1105.89" cy="400.40" r="2.0"/><circle cx="1110.10" cy="396.04" r="2.0"/><circle cx="1114.32" cy="396.04" r="2.0"/><circle cx="1118.53" cy="396.04" r="2.0"/><circle cx="1122.74" cy="400.40" r="2.0"/><circle cx="1126.95" cy="396.04" r="2.0"/><circle cx="1131.16" cy="400.40" r="2.0"/><circle cx="1135.38" cy="396.04" r="2.0"/><circle cx="1139.59" cy="396.04" r="2.0"/><circle cx="1143.80" cy="400.40" r="2.0"/><circle cx="1148.01" cy="400.40" r="2.0"/><circle cx="1152.22" cy="391.68" r="2.0"/><circle cx="1156.44" cy="400.40" r="2.0"/><circle cx="1160.65" cy="391.68" r="2.0"/><circle cx="1164.86" cy="400.40" r="2.0"/><circle cx="1169.07" cy="396.04" r="2.0"/><circle cx="1173.28" cy="400.40" r="2.0"/><circle cx="1177.50" cy="391.68" r="2.0"/><circle cx="1181.71" cy="400.40" r="2.0"/><circle cx="1185.92" cy="396.04" r="2.0"/><circle cx="1190.13" cy="396.04" r="2.0"/><circle cx="1194.34" cy="396.04" r="2.0"/><circle cx="1198.56" cy="400.40" r="2.0"/><circle cx="1202.77" cy="391.68" r="2.0"/><circle cx="1206.98" cy="404.76" r="2.0"/><circle cx="1211.19" cy="396.04" r="2.0"/><circle cx="1215.40" cy="400.40" r="2.0"/><circle cx="1219.62" cy="391.68" r="2.0"/><circle cx="1223.83" cy="400.40" r="2.0"/><circle cx="1228.04" cy="391.68" r="2.0"/><circle cx="1232.25" cy="400.40" r="2.0"/><circle cx="1236.46" cy="396.04" r="2.0"/><circle cx="1240.68" cy="400.40" r="2.0"/><circle cx="1244.89" cy="396.04" r="2.0"/><circle cx="1249.10" cy="400.40" r="2.0"/><circle cx="1253.31" cy="396.04" r="2.0"/><circle cx="1257.52" cy="396.04" r="2.0"/><circle cx="1261.74" cy="391.68" r="2.0"/><circle cx="1265.95" cy="400.40" r="2.0"/><circle cx="1270.16" cy="396.04" r="2.0"/><circle cx="1274.37" cy="400.40" r="2.0"/><circle cx="1278.58" cy="396.04" r="2.0"/><circle cx="1282.80" cy="400.40" r="2.0"/><circle cx="1287.01" cy="404.76" r="2.0"/><circle cx="1291.22" cy="396.04" r="2.0"/><circle cx="1295.43" cy="391.68" r="2.0"/><circle cx="1299.64" cy="400.40" r="2.0"/><circle cx="1303.86" cy="396.04" r="2.0"/><circle cx="1308.07" cy="396.04" r="2.0"/><circle cx="1312.28" cy="400.40" r="2.0"/><circle cx="1316.49" cy="396.04" r="2.0"/><circle cx="1320.70" cy="400.40" r="2.0"/><circle cx="1324.92" cy="396.04" r="2.0"/><circle cx="1329.13" cy="396.04" r="2.0"/><circle cx="1333.34" cy="396.04" r="2.0"/><circle cx="1337.55" cy="400.40" r="2.0"/><circle cx="1341.76" cy="400.40" r="2.0"/><circle cx="1345.98" cy="400.40" r="2.0"/><circle cx="1350.19" cy="391.68" r="2.0"/></g>
<rect x="110" y="697" width="1220" height="16.6" fill="#1f9cf6"/>
<line x1="110" y1="697.5" x2="1330" y2="697.5" stroke="#5a8dbf" stroke-width="1"/>
<line x1="110" y1="699.3" x2="1330" y2="699.3" stroke="#5eaef0" stroke-width="1.6"/>
<line x1="110" y1="713.1" x2="1330" y2="713.1" stroke="#6496c2" stroke-width="1"/>
<rect x="90.8" y="693.9" width="25.4" height="23.2" rx="2.2" fill="#e4e4e6" stroke="#9f9f9f" stroke-width="1.6"/><rect x="110.5" y="695" width="4.5" height="21" fill="#cfcfd2"/><line x1="99.8" y1="701" x2="99.8" y2="709.3" stroke="#4c4c5e" stroke-width="2.1" stroke-linecap="round"/><line x1="103.7" y1="701" x2="103.7" y2="709.3" stroke="#4c4c5e" stroke-width="2.1" stroke-linecap="round"/><line x1="107.6" y1="701" x2="107.6" y2="709.3" stroke="#4c4c5e" stroke-width="2.1" stroke-linecap="round"/>
<rect x="1324.8" y="693.9" width="25.4" height="23.2" rx="2.2" fill="#e4e4e6" stroke="#9f9f9f" stroke-width="1.6"/><rect x="1344.5" y="695" width="4.5" height="21" fill="#cfcfd2"/><line x1="1333.8" y1="701" x2="1333.8" y2="709.3" stroke="#4c4c5e" stroke-width="2.1" stroke-linecap="round"/><line x1="1337.7" y1="701" x2="1337.7" y2="709.3" stroke="#4c4c5e" stroke-width="2.1" stroke-linecap="round"/><line x1="1341.6" y1="701" x2="1341.6" y2="709.3" stroke="#4c4c5e" stroke-width="2.1" stroke-linecap="round"/>
<rect x="360" y="733.2" width="20" height="5.3" fill="#9b30a0"/><circle cx="370" cy="735.85" r="2.7" fill="#fff" stroke="#9b30a0" stroke-width="1.5"/>
<text x="392" y="740" font-family="Liberation Sans" font-size="14" fill="#333" letter-spacing="0.3">FPS</text>
<rect x="443" y="733.2" width="20" height="5.3" fill="#3aa35c"/>
<text x="475.3" y="740" font-family="Liberation Sans" font-size="14" fill="#333" letter-spacing="0.3">Smooth</text>
<rect x="552" y="733.2" width="20" height="5.3" fill="#3b2fd0"/>
<text x="584.4" y="740" font-family="Liberation Sans" font-size="14" fill="#333" letter-spacing="0.3">SmallJank</text>
<rect x="677" y="733.2" width="20" height="5.3" fill="#ef6a3c"/><circle cx="687" cy="735.85" r="2.7" fill="#fff" stroke="#ef6a3c" stroke-width="1.5"/>
<text x="709.6" y="740" font-family="Liberation Sans" font-size="14" fill="#333" letter-spacing="0.3">Jank</text>
<rect x="765.7" y="733.2" width="20" height="5.3" fill="#cc2233"/><circle cx="775.7" cy="735.85" r="2.7" fill="#fff" stroke="#cc2233" stroke-width="1.5"/>
<text x="798" y="740" font-family="Liberation Sans" font-size="14" fill="#333" letter-spacing="0.3">BigJank</text>
<rect x="877" y="733.2" width="20" height="5.3" fill="#3a7be0"/>
<text x="908.4" y="740" font-family="Liberation Sans" font-size="14" fill="#333" letter-spacing="0.3">Stutter</text>
<rect x="979.5" y="733.2" width="20" height="5.3" fill="#2ec0cf"/>
<text x="1011.7" y="740" font-family="Liberation Sans" font-size="14" fill="#333" letter-spacing="0.3">InterFrame</text>
<text x="87" y="298" transform="rotate(-22 87 298)" font-family="Liberation Sans" font-size="25" fill="#d0d0d0" fill-opacity="0.36">PerfDog</text>
<text x="577" y="298" transform="rotate(-22 577 298)" font-family="Liberation Sans" font-size="25" fill="#d0d0d0" fill-opacity="0.36">PerfDog</text>
<text x="1067" y="298" transform="rotate(-22 1067 298)" font-family="Liberation Sans" font-size="25" fill="#d0d0d0" fill-opacity="0.36">PerfDog</text>
<text x="87" y="727" transform="rotate(-22 87 727)" font-family="Liberation Sans" font-size="25" fill="#d0d0d0" fill-opacity="0.36">PerfDog</text>
<text x="577" y="727" transform="rotate(-22 577 727)" font-family="Liberation Sans" font-size="25" fill="#d0d0d0" fill-opacity="0.36">PerfDog</text>
<text x="1067" y="727" transform="rotate(-22 1067 727)" font-family="Liberation Sans" font-size="25" fill="#d0d0d0" fill-opacity="0.36">PerfDog</text>
</svg>
</body></html>
